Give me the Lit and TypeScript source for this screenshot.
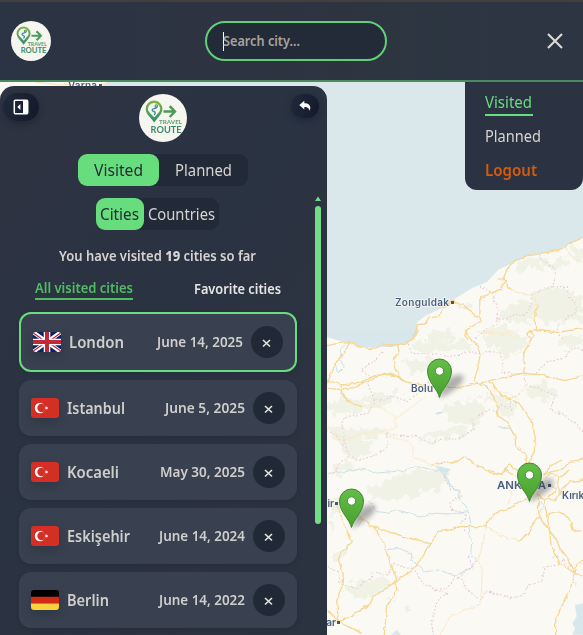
import { LitElement, html, svg, css } from "lit";
import { customElement, property } from "lit/decorators.js";
import { classMap } from "lit/directives/class-map.js";

type Flag = "gb" | "tr" | "de";
interface City { name: string; date: string; flag: Flag; active?: boolean; w: number; dw: number; }

const CITIES: City[] = [
  { name: "London", date: "June 14, 2025", flag: "gb", active: true, w: 55, dw: 86 },
  { name: "Istanbul", date: "June 5, 2025", flag: "tr", w: 58, dw: 80 },
  { name: "Kocaeli", date: "May 30, 2025", flag: "tr", w: 52, dw: 85 },
  { name: "Eskişehir", date: "June 14, 2024", flag: "tr", w: 63, dw: 86 },
  { name: "Berlin", date: "June 14, 2022", flag: "de", w: 42, dw: 86 },
];

@customElement("route-logo")
class RouteLogo extends LitElement {
  static styles = css`
    :host { display: block; width: 48px; height: 48px; }
    svg { display: block; width: 100%; height: 100%; }
    text { font-family: Lato, "Liberation Sans", sans-serif; font-weight: 700; }
  `;
  render() {
    return html`<svg viewBox="0 0 48 48">
      <defs><linearGradient id="pin" x1="0" y1="0" x2="0" y2="1"><stop offset="0" stop-color="#83b742"/><stop offset="1" stop-color="#2d8a6c"/></linearGradient></defs>
      <circle cx="24" cy="24" r="24" fill="#f6f5ef"/>
      <path fill="url(#pin)" fill-rule="evenodd" d="M15 6.5a8.3 8.3 0 0 0-8.3 8.3c0 5.4 5 8.7 8.6 13.7 3.2-4.8 8.1-8.4 8.1-13.7A8.3 8.3 0 0 0 15 6.5Zm0 2.4a6.2 6.2 0 0 1 6.2 6.1c0 3-3.7 5.6-5.9 8.6-2-2.8-6.4-5.5-6.4-8.6A6.2 6.2 0 0 1 15 8.900Z"/>
      <path d="M17.5 12.2c1 1.6-1 2.100-2.400 2.400-2.600.5-2.400 2.300-.4 2.900 2.100.6 1.800 2.200.3 3.500" fill="none" stroke="#358bb5" stroke-width="1.400"/>
      <circle cx="17.300" cy="12" r="1.800" fill="#43945c"/><circle cx="17.300" cy="11.900" r=".6" fill="#f6f5ef"/>
      <path d="M24.500 17.600h11M30.700 12.200l5.200 5.400-5.200 5.400" fill="none" stroke="#4c9b58" stroke-width="2.500"/>
      <text x="20" y="30.300" font-size="6.400" fill="#5aa06d" textLength="23" lengthAdjust="spacingAndGlyphs">TRAVEL</text>
      <text x="11.600" y="38.500" font-size="9.200" fill="#398d68" textLength="31" lengthAdjust="spacingAndGlyphs">ROUTE</text>
    </svg>`;
  }
}

@customElement("country-flag")
class CountryFlag extends LitElement {
  @property() code: Flag = "tr";
  static styles = css`
    :host { display: block; width: 28px; height: 20px; flex: none; border-radius: 3px; box-shadow: 0 4px 9px rgba(24, 32, 48, 0.3); }
    svg { display: block; width: 28px; height: 20px; border-radius: 3px; }
  `;
  render() {
    const art = {
      gb: svg`<path fill="#0b2168" d="M0 0h28v20H0z"/><path d="M0 0l28 20M28 0L0 20" stroke="#fff" stroke-width="4"/><path d="M0 .8l13 9.200M28 19.200L15 10M28 .8L15 10M0 19.200L13 10" stroke="#c2283c" stroke-width="1.300"/><path d="M14 0v20M0 10h28" stroke="#fff" stroke-width="6.600"/><path d="M14 0v20M0 10h28" stroke="#c2283c" stroke-width="4"/>`,
      tr: svg`<path fill="#d32f24" d="M0 0h28v20H0z"/><circle cx="9" cy="10" r="5.200" fill="#fff"/><circle cx="10.500" cy="10" r="4.200" fill="#d32f24"/><path fill="#fff" d="M13.200 10l1.500-.5V8l1 1.300 1.500-.5-.9 1.200.9 1.200-1.500-.5-1 1.300v-1.500z"/>`,
      de: svg`<path d="M0 0h28v7H0z"/><path fill="#d12a15" d="M0 6.800h28v6.600H0z"/><path fill="#f9d13d" d="M0 13.400h28V20H0z"/>`,
    }[this.code];
    return html`<svg viewBox="0 0 28 20">${art}</svg>`;
  }
}

@customElement("city-card")
class CityCard extends LitElement {
  @property({ attribute: false }) city!: City;
  static styles = css`
    :host { display: block; }
    .card { box-sizing: border-box; height: 56px; display: flex; align-items: center; padding: 0 12px; border-radius: 12px; background: #394150; box-shadow: 0 2px 4px rgba(20, 26, 38, 0.2); }
    .active { height: 60px; border: 2px solid #68dd7d; }
    svg.label { display: block; overflow: visible; height: 24px; flex: none; }
    .name { margin-left: 8px; font-size: 16px; }
    .date { margin-left: auto; font-size: 14px; }
    text { fill: #d0cecc; font-weight: 600; }
    button { display: grid; place-items: center; flex: none; width: 32px; height: 32px; padding: 0; margin-left: 8px; border: 0; border-radius: 50%; background: #212936; }
  `;
  render() {
    const c = this.city;
    return html`<div class=${classMap({ card: true, active: !!c.active })}>
      <country-flag .code=${c.flag}></country-flag>
      <svg class="label name" width=${c.w}><text x="0" y="18" textLength=${c.w} lengthAdjust="spacingAndGlyphs">${c.name}</text></svg>
      <svg class="label date" width=${c.dw}><text x="0" y="17" textLength=${c.dw} lengthAdjust="spacingAndGlyphs">${c.date}</text></svg>
      <button aria-label="Delete"><svg width="32" height="32"><path d="M12 14l7 6.500M19 14l-7 6.500" stroke="#e5e5e2" stroke-width="1.600"/></svg></button>
    </div>`;
  }
}

interface Sheet { y: number; forest: string[]; road: string[]; minor: string[]; border: string[]; river: string[]; lake: string[]; }

// Each sheet is drawn at three units per pixel, from x = 325 and its own y.
const SHEETS: Sheet[] = [
  {
    y: 190,
    forest: [
      "M590 215L640 200 660 215 720 200 740 225 690 235 640 228 600 240 560 245Z",
      "M730 175L774 165V215L745 205Z",
      "M620 310L680 290 740 300 774 330V400L700 400 640 395 620 350Z",
      "M520 370L580 330 630 340 625 395 560 400 520 390Z",
      "M390 350L430 335 450 350 420 360Z", "M470 430L540 405 570 430 550 450H480Z",
      "M300 435L350 415 390 430 370 450H300Z",
    ],
    road: [
      "M774 143L740 158 710 175 680 185 640 192 600 200 560 220 545 240 535 270 550 292 568 304",
      "M515 266L545 272 528 290 525 298 480 318 464 320 465 382",
      "M385 330L400 342 418 346 435 363 455 380 468 382 464 395 425 420 420 432 430 450",
      "M385 330L350 360 345 378 310 385 300 402 278 404 272 425 260 450",
      "M632 340L640 352 630 365 632 420 605 430 620 450M632 420L690 428 774 416",
    ],
    minor: ["M568 304L610 314 630 325 632 340", "M720 170L735 195 755 212 774 208", "M470 430L500 425 530 435 580 440"],
    border: [
      "M640 195L655 215 690 235 692 262 682 290 650 300 620 318 618 350 600 375 570 376 550 386 518 388 515 405 490 410 470 430 450 445",
      "M518 388L516 345 505 330 500 305 485 300 465 288", "M682 290L727 290 732 320 755 345 750 370 700 400 695 430 715 445",
    ],
    river: [], lake: [],
  },
  {
    y: 330,
    forest: [
      "M260 45L320 30 400 35 450 30 430 60 330 70 270 65Z", "M500 20L580 5 610 30 590 60 540 90 530 60 490 50Z",
      "M6 225L60 195 110 215 150 190 230 190 200 225 100 240 20 260Z", "M6 300L60 290 180 290 170 320 100 325 150 345 130 375 60 380 40 330Z",
      "M290 315L370 290 440 295 420 315 340 330 290 335Z", "M380 220L450 205 490 240 450 290 370 270 360 240Z",
      "M480 200L530 190 580 230 550 270 520 240Z", "M700 30L740 25 774 10V40L720 55Z", "M240 90L320 85 380 100 370 130 260 125Z",
      "M600 170L660 160 700 190 670 210 610 200Z", "M20 410L80 395 90 420 40 435Z",
    ],
    road: [
      "M280 0L270 22 250 38 218 44 222 65 205 90 210 115 235 152M218 44L170 45 140 55 110 52 80 38 40 40 6 47M72 40L62 65 35 92 22 125 6 160",
      "M6 175L45 178 90 172 160 140 190 133 225 140 240 155 265 160M6 150L50 165 100 160 150 137 200 130 235 152 M48 165L50 190 70 215 110 230",
      "M265 160L320 170 370 172 385 176 430 166 480 156 510 148 590 130 650 135 720 152 774 138",
      "M420 0L440 32 460 48 465 78 458 115 448 152M450 150L462 160 490 170 505 200 515 230 520 258 545 275 570 320 572 345 600 370 605 400",
      "M493 152L530 195 545 205 580 218 605 250 618 270 631 320 628 365 610 398", "M615 0L625 15 612 40 596 72 600 130",
      "M320 405L350 400 372 396 395 396 421 378 450 402 505 432 530 432 552 404 580 422",
      "M774 387L735 395 710 420 680 425 640 438",
    ],
    minor: [
      "M300 198L270 225 240 245 210 265 170 230 140 230M210 265L215 290 200 300 120 310 60 330 6 292",
      "M170 300L190 318 245 335 262 350 265 380 320 405",
      "M455 5L530 10 580 0M505 180L550 190 580 205",
    ],
    border: [
      "M250 45L260 70 320 72 370 80 440 65 460 72 480 65 525 66 532 95 530 125 560 132 600 130 632 132 660 100 720 82 740 55 774 58",
      "M172 65L155 88 108 120 135 140 130 165 148 210 180 210 200 198 250 214 275 195 280 170 300 158 340 155 380 175",
      "M148 210L133 250 60 260 50 280 58 330 70 380 105 390 150 375 185 355 185 310 220 316 270 316 290 330 325 340 350 325 400 328 448 298 440 265 480 245 515 240 530 225 560 240 555 205 585 190 600 170 598 140",
      "M605 165L650 180 690 195 675 240 720 255 774 305", "M6 300L35 318 55 350", "M70 380L40 405 30 430 6 440",
    ],
    river: [
      "M6 430L60 425 118 415 150 430 200 425 240 420 280 410 330 420 370 420",
      "M62 40L45 60 52 80 30 100 38 130 58 110 45 90M520 290L550 295M330 250L350 246M360 435L370 450 378 480",
    ],
    lake: ["M0 0H280L270 20 248 38 200 48 130 52 75 38 35 30 0 18Z", "M333 248L354 246 347 252 335 254Z", "M525 292L540 290 553 296 536 298Z", "M322 405L350 410 380 418 365 428 375 435 350 432 340 415Z"],
  },
  {
    y: 470,
    forest: [
      "M130 55L220 20 330 0 370 15 340 60 290 65 260 85 180 90 130 80Z", "M210 15L280 0 380 0 340 18Z", "M18 85L48 80 55 120 20 140Z",
      "M20 260L60 235 70 255 30 280Z", "M60 345L110 330 170 320 200 345 140 380 95 385 65 370Z", "M225 420L258 400 262 435 235 430Z",
      "M0 160L30 155 20 180ZM180 385L200 375 195 400Z",
    ],
    road: [
      "M35 105L50 140 65 185 82 215 45 255 40 270 55 310 50 350 35 390 40 455",
      "M80 120L105 140 145 170 175 215 185 250 213 325 215 365 185 405 178 495M145 170L200 188 265 208 315 218 278 285 213 335 145 380 135 402 80 438 40 455",
      "M315 218L325 210 338 185 375 180 402 170 482 170 492 150 515 125 560 112 600 88 612 85",
      "M640 80L642 140 695 210 705 235 730 265 750 310M655 90L665 130 675 190 678 230 705 280 750 310 774 318M750 310L735 360 710 410 692 450 692 495M750 310L755 285 774 270",
      "M665 132L700 125 730 140 745 180 774 184M490 0L525 12 545 0M540 0L580 25M774 30L735 35 700 70",
      "M6 420L40 455 6 457M40 455L80 475 110 490M642 140L615 175 612 192 580 215",
    ],
    minor: ["M482 170L475 215 460 270 472 300 467 402 375 440 345 495", "M482 170L510 185 545 205 572 205 580 218", "M550 105L560 65 605 25"],
    border: [
      "M6 290L40 305 45 340 100 358 115 335 140 330 140 305 190 315 205 280 245 295 265 290 290 340 330 358 370 355 390 320 415 330 425 360 470 390 480 365 520 372 560 385 600 370 610 345 650 335 660 290 700 285 715 265 735 300",
      "M380 120L375 95 410 80 405 65 370 45 355 15M380 120L420 130 422 150 410 155 420 185M430 260L445 290 425 295 400 325M330 358L365 370 335 395 320 460 325 495",
    ],
    river: [
      "M90 82L140 100 155 125 185 128 210 120 255 130 290 140 330 130 380 132 430 125 438 165 430 190 440 220 437 255 455 270 435 295 390 318 345 300 300 305 282 285 260 272 260 250 220 235 180 240",
      "M355 12L370 40 402 65 405 95 430 115M645 95L655 110 645 130M750 310L740 345M70 135L110 150 100 170",
    ],
    lake: ["M750 405L774 400V495H742L750 475 742 460 755 440Z", "M198 495L215 480 228 495Z", "M750 335L755 340 752 350Z", "M680 260L688 262 684 267Z"],
  },
];

@customElement("map-view")
class MapView extends LitElement {
  static styles = css`
    :host { display: block; }
    svg { display: block; width: 583px; height: 635px; }
    .forest { fill: #f0f2e5; }
    .road, .minor, .border, .river { fill: none; stroke-linejoin: round; }
    .road { stroke: #f7d691; stroke-width: 3.800px; }
    .minor { stroke: #fbe8c6; stroke-width: 3px; }
    .border { stroke: #e7cdd3; stroke-width: 3.500px; stroke-dasharray: 5 6; }
    .river { stroke: #cce0e6; stroke-width: 3px; }
    .lake { fill: #d8e7eb; }
    .ring { stroke-width: 1.200px; }
    text { font-family: Inter, "Liberation Sans", sans-serif; font-weight: 600; font-size: 10px; fill: #4b607e; paint-order: stroke; stroke: #f9f8f3; stroke-width: 1.500px; }
    .capital { font-size: 11px; }
    .dot { fill: #405777; }
  `;
  private pin(x: number, y: number) {
    return svg`<g transform="translate(${x} ${y})">
      <path d="M0 0C2-12 10-25 22-23C30-19 13-5 0 0Z" fill="#343434" opacity="0.38" filter="url(#soft)"/>
      <path d="M0-.5C-2-9-12-16-12-27A12 12 0 0 1 12-27C12-16 2-9 0-.5Z" fill="url(#green)" stroke="#388c2c" stroke-width="1"/>
      <circle cx="0" cy="-27" r="4.200" fill="#fff" stroke="#43962f"/>
    </g>`;
  }
  private layer(kind: "forest" | "road" | "minor" | "border" | "river" | "lake") {
    return SHEETS.map((s) => svg`<g transform="translate(325 ${s.y}) scale(.33333)">${s[kind].map((d) => svg`<path class=${kind} d=${d}/>`)}</g>`);
  }
  render() {
    return html`<svg viewBox="0 0 583 635">
      <defs>
        <filter id="soft" x="-50%" y="-50%" width="200%" height="200%"><feGaussianBlur stdDeviation="2.600"/></filter>
        <filter id="rough" filterUnits="userSpaceOnUse" x="300" y="180" width="290" height="460"><feTurbulence type="fractalNoise" baseFrequency=".12" numOctaves="3" seed="4"/><feDisplacementMap in="SourceGraphic" scale="16" xChannelSelector="R" yChannelSelector="G"/></filter>
        <filter id="wobble" filterUnits="userSpaceOnUse" x="300" y="180" width="290" height="460"><feTurbulence type="fractalNoise" baseFrequency=".15" numOctaves="2" seed="7"/><feDisplacementMap in="SourceGraphic" scale="4" xChannelSelector="R" yChannelSelector="G"/></filter>
        <linearGradient id="green" x1="0" y1="0" x2="0" y2="1"><stop stop-color="#65bd4a"/><stop offset="1" stop-color="#489f2c"/></linearGradient>
      </defs>
      <rect width="583" height="635" fill="#dae7eb"/>
      <path fill="#faf9f4" d="M0 80H110L101 87 80 95H0ZM583 238L571 243 558 250 538 254 525 257 512 263 498 270 487 282 472 288 453 300 442 308 425 316 417 322 418 330 408 343 392 347 365 347 348 343 327 337V635H583Z"/>
      <path d="M35 82L60 85 88 83M95 88L108 82" fill="none" stroke="#fae3b4"/>
      <g filter="url(#rough)">${this.layer("forest")}</g>
      ${this.layer("lake")}
      <g filter="url(#wobble)">${this.layer("river")}${this.layer("border")}${this.layer("minor")}${this.layer("road")}
        <path class="road ring" d="M544 478L551 473 559 477 557 486 562 492 554 500 543 499 537 493M548 482L556 490 549 498M545 473L552 465 562 460M560 477L570 470"/></g>
      <text x="68" y="89" textLength="29">Varna</text><path class="dot" d="M99 84h3v3h-3z"/>
      <text x="395" y="306" textLength="54">Zonguldak</text><path class="dot" d="M451 301h3v3h-3z"/>
      <text x="411" y="392" textLength="22">Bolu</text>
      <text class="capital" x="497" y="489" textLength="49" lengthAdjust="spacingAndGlyphs">ANKARA</text><path class="dot" d="M548 484h3v3h-3z"/>
      <text x="562" y="499">Kırıkkale</text>
      <text x="334" y="507" text-anchor="end">Eskişehir</text><path class="dot" d="M335 502h3v3h-3z"/>
      <text x="336" y="626" text-anchor="end">Afyonkarahisar</text><path class="dot" d="M337 621h3v3h-3z"/>
      ${this.pin(439.5, 398)}${this.pin(529.5, 502)}${this.pin(351.5, 528)}
    </svg>`;
  }
}

@customElement("app-root")
class AppRoot extends LitElement {
  static styles = css`
    :host { display: block; position: relative; width: 583px; height: 635px; overflow: hidden; font-family: "Noto Sans", "Open Sans", sans-serif; color: #d6d3d1; }
    * { box-sizing: border-box; }
    .map { position: absolute; inset: 0; }
    header { position: relative; height: 82px; border-top: 2px solid #443f3f; border-bottom: 2px solid #4b895f; background: linear-gradient(90deg, #2b3444, #2e3340 48%, #2c3641 75%, #2d3442); display: grid; grid-template-columns: 205px 182px 1fr; align-items: center; }
    .brand { width: 40px; height: 40px; margin-left: 11px; }
    .search { height: 40px; border: 2px solid #60d078; border-radius: 20px; background: #242b38; display: flex; align-items: center; padding-left: 16px; }
    .caret { width: 1px; height: 19px; background: #fff; margin-right: -1px; }
    .hint { color: #a8a29e; font-size: 14px; font-weight: 600; }
    .close { justify-self: end; margin-right: 18px; display: block; }
    .t { display: block; overflow: visible; height: 24px; flex: none; }
    .t text { fill: currentColor; }
    nav { position: absolute; right: 0; top: 82px; width: 118px; height: 108px; padding: 8px 0 0 20px; border-radius: 0 0 12px 12px; background: #2b3342; display: flex; flex-direction: column; gap: 10px; }
    .here { color: #68dd7d; height: 24px; }
    .here span { display: block; width: 48px; height: 2px; background: #68dd7d; }
    nav .t { font-size: 16px; }
    .here .t { height: 24px; }
    .logout { color: #d65b0c; font-weight: 600; }
    aside { position: relative; margin-top: 4px; width: 327px; height: 549px; border-radius: 14px 14px 0 0; background: linear-gradient(125deg, #2e3341, #2a3342 45%, #2d3340 75%, #2a3340); }
    .top { display: grid; grid-template-columns: 139px 48px 1fr; padding-top: 8px; height: 68px; }
    .pill { width: 36px; height: 28px; border-radius: 14px; background: linear-gradient(110deg, #202a3a, #12192a); box-shadow: 0 3px 6px rgba(20, 26, 40, 0.45); display: grid; place-items: center; }
    .fold { margin: -1px 0 0 3px; }
    .back { width: 28px; height: 24px; justify-self: end; margin-right: 8px; }
    .pill svg { display: block; }
    .tabs { display: flex; width: max-content; height: 32px; border-radius: 9px; background: #222a37; }
    .tabs.a { margin-left: 78px; }
    .tabs.b { margin: 12px 0 0 96px; }
    .tab { display: flex; align-items: center; justify-content: center; border-radius: 9px; font-size: 16px; }
    .on { background: #68dd7d; color: #242c39; }
    .w81 { width: 81px; }
    .w89 { width: 89px; padding-right: 1px; }
    .w48 { width: 48px; padding-right: 1px; }
    .w75 { width: 75px; padding-right: 1px; }
    .summary { margin: 14px 0 0 59px; font-size: 14px; font-weight: 600; }
    .heavy { font-weight: 800; }
    .filters { display: flex; justify-content: space-between; margin: 8px 46px 0 35px; font-size: 14px; font-weight: 600; height: 24px; }
    .all { color: #4fbd60; border-bottom: 2px solid #4fbd60; height: 24px; }
    .all .t { height: 22px; }
    .fav { color: #e7e5e4; }
    .list { display: flex; flex-direction: column; gap: 8px; margin: 12px 30px 0 19px; }
    .scroll { position: absolute; left: 315px; top: 110px; width: 6px; }
    .arrow { display: block; width: 6px; height: 6px; }
    .thumb { height: 318px; margin-top: 4px; border-radius: 3px; background: #74dc87; }
  `;
  private label(text: unknown, w: number, y = 18) {
    return html`<svg class="t" width=${w}><text x="0" y=${y} textLength=${w} lengthAdjust="spacingAndGlyphs">${text}</text></svg>`;
  }
  render() {
    return html`
      <map-view class="map"></map-view>
      <header>
        <route-logo class="brand"></route-logo>
        <div class="search"><span class="caret"></span><div class="hint">${this.label("Search city...", 77, 17)}</div></div>
        <svg class="close" width="20" height="20"><path d="M3 3l14 14M17 3L3 17" stroke="#dedbd7" stroke-width="2.100"/></svg>
      </header>
      <nav>
        <div class="here">${this.label("Visited", 47)}<span></span></div>
        <div>${this.label("Planned", 56)}</div>
        <div class="logout">${this.label("Logout", 52)}</div>
      </nav>
      <aside>
        <div class="top">
          <div class="pill fold"><svg width="16" height="16" viewBox="0 0 16 16"><path d="M2.300 1.300h11.400q1 0 1 1v11.400q0 1-1 1H2.300q-1 0-1-1V2.300q0-1 1-1z" fill="none" stroke="#fff" stroke-width="1.500"/><path d="M10 1h4l1 1v12l-1 1h-4z" fill="#fff"/><path d="M7.400 5L4.300 8l3.100 3z" fill="#fff"/></svg></div>
          <route-logo></route-logo>
          <div class="pill back"><svg width="12" height="12" viewBox="0 0 12 12"><path d="M.3 5L5.300.7v2.600c4.200 0 6 2 6 4.400 0 1.400-.6 2.500-1.200 3.200.4-2.200-.9-4-4.800-4v2.500z" fill="#fff"/></svg></div>
        </div>
        <div class="tabs a"><div class="tab on w81">${this.label("Visited", 49)}</div><div class="tab w89">${this.label("Planned", 57)}</div></div>
        <div class="tabs b"><div class="tab on w48">${this.label("Cities", 39)}</div><div class="tab w75">${this.label("Countries", 67)}</div></div>
        <div class="summary"><svg class="t" width="197"><text x="0" y="17" textLength="197" lengthAdjust="spacingAndGlyphs">You have visited <tspan class="heavy">19</tspan> cities so far</text></svg></div>
        <div class="filters"><div class="all">${this.label("All visited cities", 98, 17)}</div><div class="fav">${this.label("Favorite cities", 87, 18)}</div></div>
        <div class="list">${CITIES.map((c) => html`<city-card .city=${c}></city-card>`)}</div>
        <div class="scroll"><svg class="arrow" viewBox="0 0 6 6"><path d="M3 .5L6 5H0z" fill="#74dc87"/></svg><div class="thumb"></div></div>
      </aside>`;
  }
}
